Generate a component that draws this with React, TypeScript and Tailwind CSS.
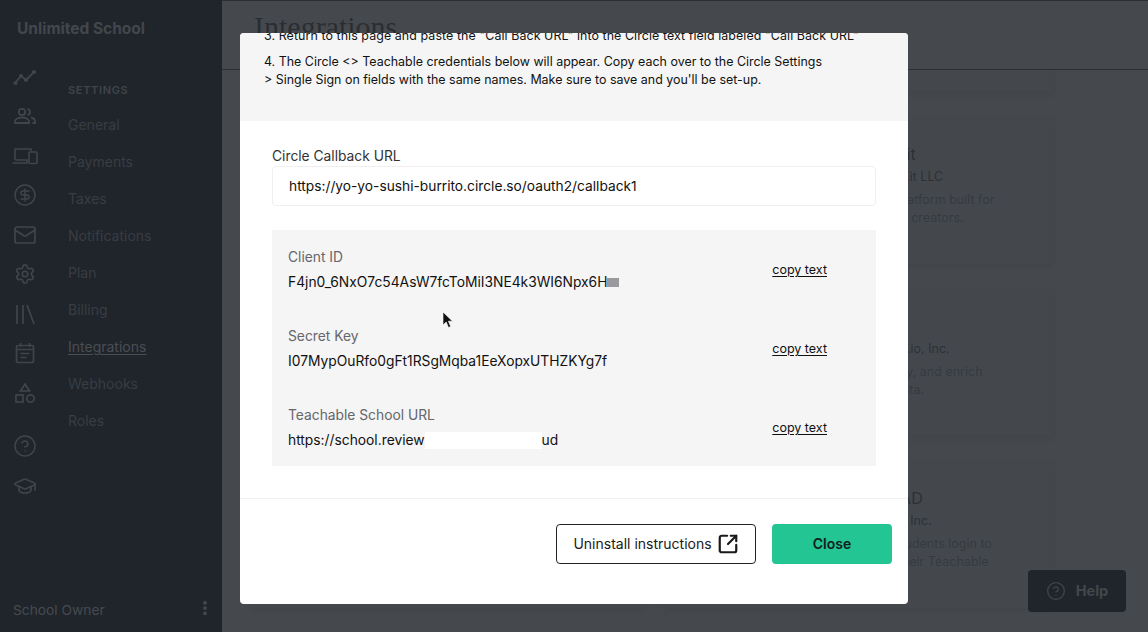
import { CircleDollarSign, CircleHelp, EllipsisVertical, GraduationCap, Mail, Settings, SquareArrowOutUpRight } from 'lucide-react';
import type { ReactNode } from 'react';

const navLinks = ['General', 'Payments', 'Taxes', 'Notifications', 'Plan', 'Billing', 'Integrations', 'Webhooks', 'Roles'];

const cards = [
  { title: '', company: '', lines: [] as string[] },
  { title: '', company: '', lines: [] as string[] },
  { title: '', company: '', lines: [] as string[] },
  { title: 'ConvertKit', company: 'By ConvertKit LLC', lines: ['The email platform built for', 'for all online creators.'] },
  { title: '', company: '', lines: [] as string[] },
  { title: 'Segment', company: 'By Segment.io, Inc.', lines: ['Collect, unify, and enrich', 'customer data.'] },
  { title: '', company: '', lines: [] as string[] },
  { title: 'LaunchPAD', company: 'LaunchPAD, Inc.', lines: ['Lets your students login to', 'directly to their Teachable'] },
];

const credentials = [
  { label: 'Client ID', value: <>F4jn0_6NxO7c54AsW7fcToMiI3NE4k3WI6Npx6H<span className="inline-block w-3 h-[9px] bg-[#9a9a9e]" /></> },
  { label: 'Secret Key', value: <>I07MypOuRfo0gFt1RSgMqba1EeXopxUTHZKYg7f</> },
  {
    label: 'Teachable School URL',
    value: <>https://school.review<span className="inline-block w-[117px] h-[17px] bg-white align-middle" />ud</>,
  },
];

function RailIcon({ children }: { children: ReactNode }) {
  return <div className="h-[39.5px] flex items-center justify-center">{children}</div>;
}

function Sidebar() {
  const stroke = '#40454a';
  return (
    <aside className="w-[222px] shrink-0 bg-[#1f252b] flex flex-col relative">
      <h2 className="pl-[17px] pt-[19px] text-[15.5px] leading-5 font-bold text-[#42474c]">Unlimited School</h2>
      <div className="flex flex-1 min-h-0">
        <div className="w-[50px] pt-[18px] shrink-0">
          <RailIcon>
            <svg width="24" height="24" viewBox="0 0 24 24" fill="none" stroke={stroke} strokeWidth="1.8">
              <path d="M2 18l6-7 5 4 8-8" />
              <circle cx="2.5" cy="18" r="1.2" fill={stroke} />
              <circle cx="8" cy="11" r="1.2" fill={stroke} />
              <circle cx="13" cy="15" r="1.2" fill={stroke} />
              <circle cx="21" cy="7" r="1.2" fill={stroke} />
            </svg>
          </RailIcon>
          <RailIcon>
            <svg width="24" height="24" viewBox="0 0 24 24" fill="none" stroke={stroke} strokeWidth="1.8">
              <circle cx="9" cy="8" r="3.2" />
              <path d="M2 19v-1.5c0-2.5 3.5-4 7-4s7 1.500 7 4V19z" />
              <path d="M14.500 4.800a3.300 3.300 0 0 1 0 6.400" />
              <path d="M18 13.500c2.500.6 4 1.900 4 3.800V19h-2.500" />
            </svg>
          </RailIcon>
          <RailIcon>
            <svg width="26" height="24" viewBox="0 0 26 24" fill="none" stroke={stroke} strokeWidth="1.6">
              <path d="M3 16V5h16v2" />
              <path d="M0.500 19h14.500v-3H3" />
              <rect x="17" y="8" width="8" height="11.500" rx="1" />
            </svg>
          </RailIcon>
          <RailIcon><CircleDollarSign size={24} color={stroke} strokeWidth={1.5} /></RailIcon>
          <RailIcon><Mail size={24} color={stroke} strokeWidth={1.7} /></RailIcon>
          <RailIcon><Settings size={22} color={stroke} strokeWidth={1.8} /></RailIcon>
          <RailIcon>
            <svg width="24" height="24" viewBox="0 0 24 24" fill="none" stroke={stroke} strokeWidth="1.7">
              <path d="M4 3v19M10 3v19M14 3l7 19" />
            </svg>
          </RailIcon>
          <RailIcon>
            <svg width="24" height="24" viewBox="0 0 24 24" fill="none" stroke={stroke} strokeWidth="1.7">
              <rect x="3.500" y="4.500" width="17" height="17" rx="1.500" />
              <path d="M7.500 2v4M16.500 2v4M3.500 8.500h17M7.500 12.500h9M7.500 16.500h6" />
            </svg>
          </RailIcon>
          <RailIcon>
            <svg width="24" height="24" viewBox="0 0 24 24" fill="none" stroke={stroke} strokeWidth="1.7">
              <path d="M12 3l4.500 7h-9z" />
              <rect x="3" y="14" width="7" height="7" />
              <circle cx="17.500" cy="17.500" r="3.700" />
            </svg>
          </RailIcon>
          <div className="mt-[14px]">
            <RailIcon><CircleHelp size={24} color={stroke} strokeWidth={1.5} /></RailIcon>
            <RailIcon><GraduationCap size={24} color={stroke} strokeWidth={1.7} /></RailIcon>
          </div>
        </div>
        <nav className="pl-[18px] pt-[43px]">
          <p className="text-[11px] leading-4 font-semibold tracking-[0.06em] text-[#3f4449] mb-4">SETTINGS</p>
          <ul className="flex flex-col gap-[16px] text-sm leading-[21px] text-[#393d43]">
            {navLinks.map((link) => (
              <li key={link} className={link === 'Integrations' ? 'text-[#4a4e53] underline underline-offset-2' : ''}>
                {link}
              </li>
            ))}
          </ul>
        </nav>
      </div>
      <div className="h-[49px] pl-[13px] pr-2 flex items-center justify-between border-t border-[#20262c] text-[13.75px] text-[#464a4f]">
        <span className="pt-[4px]">School Owner</span>
        <EllipsisVertical size={18} color="#474b50" strokeWidth={3} />
      </div>
    </aside>
  );
}

function PageBehind() {
  return (
    <main className="flex-1 min-w-0 flex flex-col bg-[#45494e] border-t border-[#2a3030]">
      <header className="h-[69px] shrink-0 border-b border-[#2b3035] pl-[32px] pt-[8px]">
        <h1 className="text-[30px] leading-9 text-[#2a2e33]" style={{ fontFamily: '"Liberation Serif", serif' }}>Integrations</h1>
      </header>
      <div className="flex-1 min-h-0 overflow-hidden pl-[32px] pr-[95px]">
        <div className="grid grid-cols-2 gap-x-6 gap-y-[26px] mt-[-124px]">
          {cards.map((card, i) => (
            <div key={i} className="h-[146px] bg-[#44484d] border border-[#43474c] shadow-[0_3px_4px_#424649] pl-[169px] pt-[25px]">
              <p className="text-base leading-5 text-[#2c3035]">{card.title}</p>
              <p className="text-[12.5px] leading-5 mt-[3px] text-[#2d3136]">{card.company}</p>
              <div className="text-[12.5px] leading-[18px] mt-1 text-[#363a40]">
                {card.lines.map((line) => <p key={line} className="whitespace-nowrap">{line}</p>)}
              </div>
            </div>
          ))}
        </div>
      </div>
    </main>
  );
}

function Modal() {
  return (
    <div className="absolute left-[240px] top-[33px] w-[668px] h-[571px] bg-white rounded-[4px] overflow-hidden flex flex-col text-[#111]">
      <div className="h-[88px] shrink-0 bg-[#f5f5f5] px-6 overflow-hidden text-[12.45px] leading-[18px]">
        <p className="mt-[-6px] whitespace-nowrap tracking-[0.07px]">3. Return to this page and paste the "Call Back URL" into the Circle text field labeled "Call Back URL"</p>
        <p className="mt-2">
          4. The Circle &lt;&gt; Teachable credentials below will appear. Copy each over to the Circle Settings<br />
          &gt; Single Sign on fields with the same names. Make sure to save and you'll be set-up.
        </p>
      </div>
      <div className="flex-1 px-8 pt-[25px]">
        <label className="block text-[13.8px] leading-5 text-[#333]">Circle Callback URL</label>
        <div className="h-10 border border-[#efefef] rounded-[4px] pl-4 pt-[1px] flex items-center text-[13.75px]">
          https://yo-yo-sushi-burrito.circle.so/oauth2/callback1
        </div>
        <div className="mt-6 h-[236px] bg-[#f5f5f5] pl-4 pr-[49px] pt-[9px] flex flex-col gap-[19px]">
          {credentials.map((item) => (
            <div key={item.label} className="flex items-center justify-between h-[60px]">
              <div>
                <p className="text-[13.8px] leading-5 text-[#66666b]">{item.label}</p>
                <p className="text-[13.8px] leading-5 mt-[5px] whitespace-nowrap">{item.value}</p>
              </div>
              <a className="text-[12.5px] leading-4 underline underline-offset-2 mt-[2px]">copy text</a>
            </div>
          ))}
        </div>
      </div>
      <div className="h-[106px] shrink-0 border-t border-[#f0f0f0] px-4 pt-[25px] flex justify-end gap-4">
        <button className="w-[200px] h-10 border border-[#222] rounded-[4px] flex items-center justify-center gap-[5px] text-sm text-[#1a1a1a]">
          Uninstall instructions
          <SquareArrowOutUpRight size={22} strokeWidth={2.4} color="#1a1a1a" />
        </button>
        <button className="w-[120px] h-10 rounded-[4px] bg-[#23c592] text-sm font-semibold text-[#10201b]">Close</button>
      </div>
    </div>
  );
}

export default function App() {
  return (
    <div className="relative w-[1148px] h-[632px] overflow-hidden flex" style={{ fontFamily: 'Inter, sans-serif' }}>
      <Sidebar />
      <PageBehind />
      <Modal />
      {/* mouse pointer caught in the recording */}
      <svg className="absolute left-[442px] top-[311px]" width="12" height="18" viewBox="0 0 12 18">
        <path d="M1 1v13l3.200-3 2.300 5.500 2.200-1-2.300-5.300H10.500z" fill="#111" stroke="#fff" strokeWidth="0.6" />
      </svg>
      <div className="absolute left-[1028px] top-[570px] w-[98px] h-[42px] rounded-[4px] bg-[#1f252b] flex items-center justify-center gap-[10px] text-[#42474c]">
        <CircleHelp size={20} strokeWidth={1.5} />
        <span className="text-[14.5px] font-bold">Help</span>
      </div>
    </div>
  );
}
